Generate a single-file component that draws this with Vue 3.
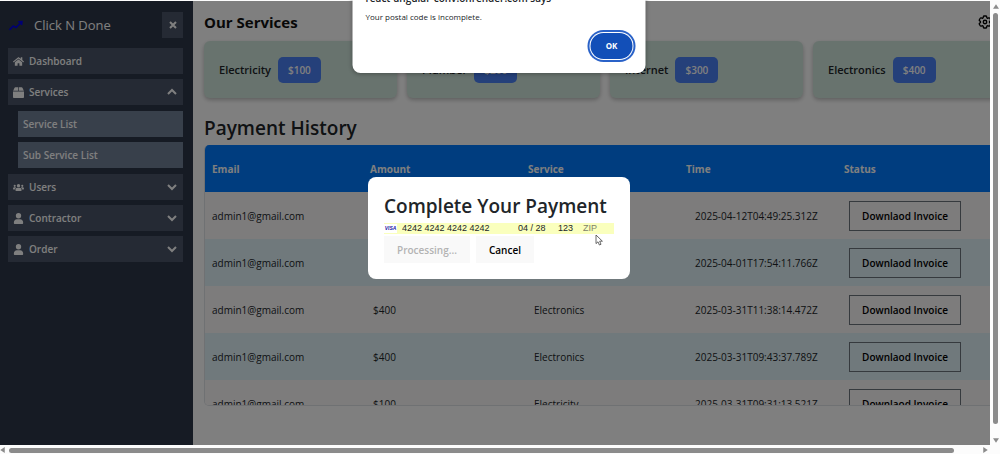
<script setup>
import { ref } from 'vue'

const services = [
  { name: 'Electricity', price: '$100' },
  { name: 'Plumber', price: '$200' },
  { name: 'Internet', price: '$300' },
  { name: 'Electronics', price: '$400' },
]

const columns = ['Email', 'Amount', 'Service', 'Time', 'Status']

const payments = [
  { email: 'admin1@gmail.com', amount: '$300', service: 'Internet', time: '2025-04-12T04:49:25.312Z' },
  { email: 'admin1@gmail.com', amount: '$100', service: 'Electricity', time: '2025-04-01T17:54:11.766Z' },
  { email: 'admin1@gmail.com', amount: '$400', service: 'Electronics', time: '2025-03-31T11:38:14.472Z' },
  { email: 'admin1@gmail.com', amount: '$400', service: 'Electronics', time: '2025-03-31T09:43:37.789Z' },
  { email: 'admin1@gmail.com', amount: '$100', service: 'Electricity', time: '2025-03-31T09:31:13.521Z' },
]

const menus = ['Users', 'Contractor', 'Order']

const card = ref('4242 4242 4242 4242')
const expiry = ref('04 / 28')
const cvc = ref('123')
const zip = ref('')
</script>

<template>
  <div class="window">
    <div class="viewport">
      <div class="page">
        <aside class="sidebar">
          <header class="brand">
            <svg class="trend" viewBox="0 0 14 10"><path d="M1 9 L4.5 5.5 L7 6.8 L12 1.8 M9 1.6 L12.4 1.4 L12 4.6" /></svg>
            <span class="brand-name">Click N Done</span>
            <button class="close" aria-label="Close menu">
              <svg viewBox="0 0 10 10"><path d="M2 2 L8 8 M8 2 L2 8" /></svg>
            </button>
          </header>
          <nav class="menu">
            <a class="item" href="#">
              <svg class="icon" viewBox="0 0 576 512"><path d="M280 148 96 300v164c0 9 7 16 16 16h112c9 0 16-7 16-16v-96c0-9 7-16 16-16h64c9 0 16 7 16 16v96c0 9 7 16 16 16h112c9 0 16-7 16-16V300L296 148c-5-4-11-4-16 0zM572 251 488 182V44c0-7-5-12-12-12h-56c-7 0-12 5-12 12v72L318 43c-18-15-43-15-61 0L4 251c-5 4-6 12-2 17l26 31c4 5 12 6 17 2L280 107c5-4 11-4 16 0l235 194c5 4 13 3 17-2l26-31c4-5 3-13-2-17z" /></svg>
              <span>Dashboard</span>
            </a>
            <button class="item">
              <svg class="icon" viewBox="0 0 512 512"><path d="M240 10H110c-16 0-30 9-37 24L8 180h232zM504 180 439 34c-7-15-21-24-37-24H272v170zM0 212v250c0 26 22 48 48 48h416c26 0 48-22 48-48V212z" /></svg>
              <span>Services</span>
              <svg class="chevron" viewBox="0 0 10 10"><path d="M1 7 L5 3 L9 7" /></svg>
            </button>
            <div class="submenu">
              <a class="item sub" href="#">Service List</a>
              <a class="item sub" href="#">Sub Service List</a>
            </div>
            <button v-for="menu in menus" :key="menu" class="item">
              <svg v-if="menu === 'Users'" class="icon" viewBox="0 0 640 512">
                <circle cx="100" cy="160" r="62" /><circle cx="540" cy="160" r="62" /><circle cx="320" cy="150" r="96" />
                <path d="M0 330c0-50 30-88 74-88h60c18 0 34 6 46 16-50 30-70 70-74 114H28c-16 0-28-14-28-42zM640 330c0-50-30-88-74-88h-60c-18 0-34 6-46 16 50 30 70 70 74 114h78c16 0 28-14 28-42zM140 400c0-76 50-128 116-128h128c66 0 116 52 116 128 0 40-18 64-46 64H186c-28 0-46-24-46-64z" />
              </svg>
              <svg v-else class="icon" viewBox="0 0 512 512"><circle cx="256" cy="128" r="124" /><path d="M40 440c0-90 60-150 134-150h164c74 0 134 60 134 150v24c0 26-20 46-46 46H86c-26 0-46-20-46-46z" /></svg>
              <span>{{ menu }}</span>
              <svg class="chevron" viewBox="0 0 10 10"><path d="M1 3 L5 7 L9 3" /></svg>
            </button>
          </nav>
        </aside>

        <main class="main">
          <div class="titlebar">
            <h2>Our Services</h2>
            <button class="settings" aria-label="Settings">
              <svg viewBox="0 0 24 24">
                <path d="M9.594 3.94c.09-.542.56-.94 1.11-.94h2.593c.55 0 1.02.398 1.11.94l.213 1.281c.063.374.313.686.645.87.074.04.147.083.22.127.325.196.72.257 1.075.124l1.217-.456a1.125 1.125 0 0 1 1.37.49l1.296 2.247a1.125 1.125 0 0 1-.26 1.431l-1.003.827c-.293.241-.438.613-.43.992a7.723 7.723 0 0 1 0 .255c-.008.378.137.75.43.991l1.004.827c.424.35.534.955.26 1.43l-1.298 2.247a1.125 1.125 0 0 1-1.369.491l-1.217-.456c-.355-.133-.75-.072-1.076.124a6.47 6.47 0 0 1-.22.128c-.331.183-.581.495-.644.869l-.213 1.281c-.09.543-.56.94-1.11.94h-2.594c-.55 0-1.019-.398-1.11-.94l-.213-1.281c-.062-.374-.312-.686-.644-.87a6.52 6.52 0 0 1-.22-.127c-.325-.196-.72-.257-1.076-.124l-1.217.456a1.125 1.125 0 0 1-1.369-.49l-1.297-2.247a1.125 1.125 0 0 1 .26-1.431l1.004-.827c.292-.24.437-.613.43-.991a6.932 6.932 0 0 1 0-.255c.007-.38-.138-.751-.43-.992l-1.004-.827a1.125 1.125 0 0 1-.26-1.43l1.297-2.247a1.125 1.125 0 0 1 1.37-.491l1.216.456c.356.133.751.072 1.076-.124.072-.044.146-.086.22-.128.332-.183.582-.495.644-.869l.214-1.28Z" />
                <circle cx="12" cy="12" r="2.6" />
              </svg>
            </button>
          </div>

          <section class="cards">
            <article v-for="service in services" :key="service.name" class="card">
              <span>{{ service.name }}</span>
              <button class="price">{{ service.price }}</button>
            </article>
          </section>

          <h1>Payment History</h1>
          <div class="table-box">
            <table>
              <thead>
                <tr><th v-for="column in columns" :key="column" scope="col">{{ column }}</th></tr>
              </thead>
              <tbody>
                <tr v-for="payment in payments" :key="payment.time">
                  <td>{{ payment.email }}</td>
                  <td class="amount">{{ payment.amount }}</td>
                  <td class="service">{{ payment.service }}</td>
                  <td class="time">{{ payment.time }}</td>
                  <td class="status"><button class="invoice">Downlaod Invoice</button></td>
                </tr>
              </tbody>
            </table>
          </div>
        </main>
      </div>
      <div class="backdrop"></div>
    </div>

    <div class="bar vertical">
      <svg class="arrow" viewBox="0 0 8 6"><path d="M4 0 L8 6 H0 Z" /></svg>
      <div class="thumb"></div>
      <svg class="arrow" viewBox="0 0 8 6"><path d="M0 0 H8 L4 6 Z" /></svg>
    </div>
    <div class="bar horizontal">
      <svg class="arrow" viewBox="0 0 6 8"><path d="M6 0 V8 L0 4 Z" /></svg>
      <div class="thumb"></div>
      <svg class="arrow" viewBox="0 0 6 8"><path d="M0 0 L6 4 L0 8 Z" /></svg>
    </div>

    <div class="layer">
      <form class="modal" @submit.prevent>
        <h2>Complete Your Payment</h2>
        <div class="card-field">
          <span class="visa">VISA</span>
          <input v-model="card" class="number" aria-label="Card number" />
          <input v-model="expiry" class="expiry" aria-label="Expiry" />
          <input v-model="cvc" class="cvc" aria-label="CVC" />
          <input v-model="zip" class="zip" aria-label="ZIP" placeholder="ZIP" />
        </div>
        <div class="actions">
          <button type="submit" disabled>Processing...</button>
          <button type="button">Cancel</button>
        </div>
        <svg class="pointer" viewBox="0 0 8 12"><path d="M1 1 V9.6 L3 7.8 L4.4 11 L6 10.3 L4.7 7.2 H7.4 Z" /></svg>
      </form>
    </div>

    <div class="alert" role="alertdialog" aria-labelledby="alert-title">
      <strong id="alert-title">react-angular-conv.onrender.com says</strong>
      <p>Your postal code is incomplete.</p>
      <button>OK</button>
    </div>
  </div>
</template>

<style>
body {
  margin: 0;
  overflow: hidden;
}
</style>

<style scoped>
* {
  box-sizing: border-box;
}

.window {
  position: relative;
  display: grid;
  grid-template-columns: minmax(0, 1fr) 10px;
  grid-template-rows: minmax(0, 1fr) 9px;
  height: 100vh;
  padding-top: 1px;
  overflow: hidden;
  background: #fcfcfc;
  color: #212529;
  font-family: "Open Sans", "Noto Sans", sans-serif;
  font-size: 10px;
  line-height: 16px;
}

button,
input {
  margin: 0;
  padding: 0;
  border: 0;
  background: none;
  color: inherit;
  font: inherit;
}

a {
  color: inherit;
  text-decoration: none;
}

h1,
h2,
p {
  margin: 0;
}

.viewport {
  position: relative;
  overflow: hidden;
  background: #fff;
}

.page {
  display: flex;
  width: calc(100% + 16px);
  height: 100%;
}

.backdrop {
  position: absolute;
  inset: 0;
  background: rgba(0, 0, 0, 0.5);
}

/* Sidebar */
.sidebar {
  flex: none;
  width: 193px;
  padding: 11px 10px 0 8px;
  background: #2d3748;
  color: #fff;
}

.brand {
  display: flex;
  align-items: center;
  height: 26px;
  margin-bottom: 10px;
}

.trend {
  width: 16px;
  height: 11px;
  margin-right: 10px;
  fill: none;
  stroke: #0000e6;
  stroke-width: 1.5;
}

.brand-name {
  flex: 1;
  font-size: 13px;
}

.close {
  display: grid;
  place-items: center;
  width: 21px;
  height: 26px;
  background: #4a5568;
}

.close svg {
  width: 10px;
  height: 10px;
  fill: none;
  stroke: #fff;
  stroke-width: 2;
}

.menu {
  display: flex;
  flex-direction: column;
  gap: 5px;
}

.item {
  display: flex;
  align-items: center;
  gap: 5px;
  height: 26px;
  padding: 0 6px 0 5px;
  background: #4a5568;
  font-weight: 600;
  text-align: left;
}

.submenu {
  display: flex;
  flex-direction: column;
  gap: 5px;
  margin: 1px 0 1px 10px;
}

.sub {
  background: #718096;
}

.icon {
  width: 11px;
  height: 11px;
  fill: #fff;
}

.chevron {
  width: 10px;
  height: 10px;
  margin-left: auto;
  fill: none;
  stroke: #fff;
  stroke-width: 2;
}

/* Main area */
.main {
  flex: 1;
  min-width: 0;
  padding: 11px 0 0 11px;
}

.titlebar {
  display: flex;
  align-items: center;
  justify-content: space-between;
  height: 20px;
  margin-bottom: 9px;
  padding-right: 13px;
}

.titlebar h2 {
  font-size: 15px;
  font-weight: 700;
  color: #111;
}

.settings {
  display: flex;
}

.settings svg {
  width: 16px;
  height: 16px;
  fill: none;
  stroke: #000;
  stroke-width: 2;
}

.cards {
  display: grid;
  grid-template-columns: repeat(4, 1fr);
  gap: 10px;
  margin-bottom: 17px;
}

.card {
  display: flex;
  align-items: center;
  gap: 7px;
  height: 57px;
  padding: 0 15px;
  border-radius: 6px;
  background: #d1e7dd;
  box-shadow: 0 2px 4px rgba(0, 0, 0, 0.25);
  font-size: 11px;
  font-weight: 600;
}

.price {
  height: 26px;
  padding: 0 10px;
  border-radius: 5px;
  background: #4a80f5;
  color: #fff;
  font-size: 10px;
}

h1 {
  margin-bottom: 4px;
  font-size: 19px;
  font-weight: 600;
  line-height: 26px;
}

.table-box {
  height: 261px;
  overflow: hidden;
  border: 1px solid #dee2e6;
  border-top: 0;
  border-radius: 5px;
}

table {
  width: 100%;
  border-collapse: collapse;
  table-layout: fixed;
}

th,
td {
  height: 47px;
  padding: 0 0 0 7px;
  text-align: left;
}

th {
  width: 158px;
  background: #007bff;
  color: #fff;
  font-weight: 700;
}

th:last-child {
  width: auto;
}

tbody tr {
  background: #faf8f8;
}

tbody tr:nth-child(even) {
  background: #e0f3f8;
}

.amount {
  padding-left: 10px;
}

.service {
  padding-left: 13px;
}

.time {
  padding-left: 16px;
}

.status {
  padding-left: 12px;
}

.invoice {
  width: 112px;
  height: 30px;
  border: 1px solid #6c757d;
  color: #000;
  font-weight: 600;
}

/* Scroll bars */
.bar {
  display: flex;
  align-items: center;
  justify-content: space-between;
}

.bar .thumb {
  border-radius: 3px;
  background: #8b8b8b;
}

.arrow {
  flex: none;
  fill: #8b8b8b;
}

.vertical {
  flex-direction: column;
  gap: 4px;
  padding: 3px 0 2px 1px;
}

.vertical .thumb {
  flex: 1;
  width: 5px;
  margin-bottom: 10px;
}

.vertical .arrow {
  width: 6px;
  height: 5px;
}

.horizontal {
  gap: 4px;
  padding: 1px 2px 0 0;
}

.horizontal .thumb {
  flex: 1;
  height: 5px;
  margin-right: 25px;
}

.horizontal .arrow {
  width: 5px;
  height: 6px;
}

/* Payment dialog */
.layer {
  position: absolute;
  inset: 2px 2px 0 0;
  display: grid;
  place-items: center;
}

.modal {
  position: relative;
  width: 262px;
  padding: 16px;
  border-radius: 8px;
  background: #fff;
}

.modal h2 {
  margin-bottom: 3px;
  font-size: 19px;
  font-weight: 600;
  line-height: 27px;
  white-space: nowrap;
}

.card-field {
  display: flex;
  align-items: center;
  height: 11px;
  background: #faffbd;
  font-family: "Liberation Sans", Arial, sans-serif;
  font-size: 9px;
  line-height: 11px;
}

.visa {
  width: 13px;
  margin-right: 5px;
  background: #fff;
  color: #1a1aa6;
  font-size: 5px;
  font-style: italic;
  font-weight: 700;
  line-height: 9px;
  text-align: center;
}

.card-field input {
  min-width: 0;
  height: 11px;
}

.number {
  width: 116px;
}

.expiry {
  width: 40px;
}

.cvc {
  width: 25px;
}

.zip {
  flex: 1;
}

.zip::placeholder {
  color: #80836a;
}

.actions {
  display: flex;
  gap: 6px;
  margin-top: 2px;
}

.actions button {
  height: 27px;
  padding: 0 13px;
  background: #f9f9f9;
  color: #000;
  font-weight: 600;
}

.actions button:disabled {
  color: #b3b3b3;
}

.pointer {
  position: absolute;
  top: 57px;
  right: 27px;
  width: 8px;
  height: 12px;
  fill: #fff;
  stroke: #444;
  stroke-width: 0.8;
}

/* Browser alert */
.alert {
  position: absolute;
  top: -24px;
  left: calc(50% - 1px);
  display: flex;
  flex-direction: column;
  width: 293px;
  padding: 14px 13px;
  transform: translateX(-50%);
  border-radius: 8px;
  background: #fff;
  box-shadow: 0 1px 4px rgba(0, 0, 0, 0.3);
}

.alert strong {
  font-size: 10px;
  font-weight: 600;
}

.alert p {
  margin: 3px 0 8px;
  font-size: 8px;
}

.alert button {
  align-self: flex-end;
  width: 42px;
  height: 26px;
  border-radius: 13px;
  background: #124fb8;
  box-shadow: 0 0 0 1px #fff, 0 0 0 3px #2a62c8;
  color: #fff;
  font-size: 8px;
  font-weight: 700;
}
</style>
